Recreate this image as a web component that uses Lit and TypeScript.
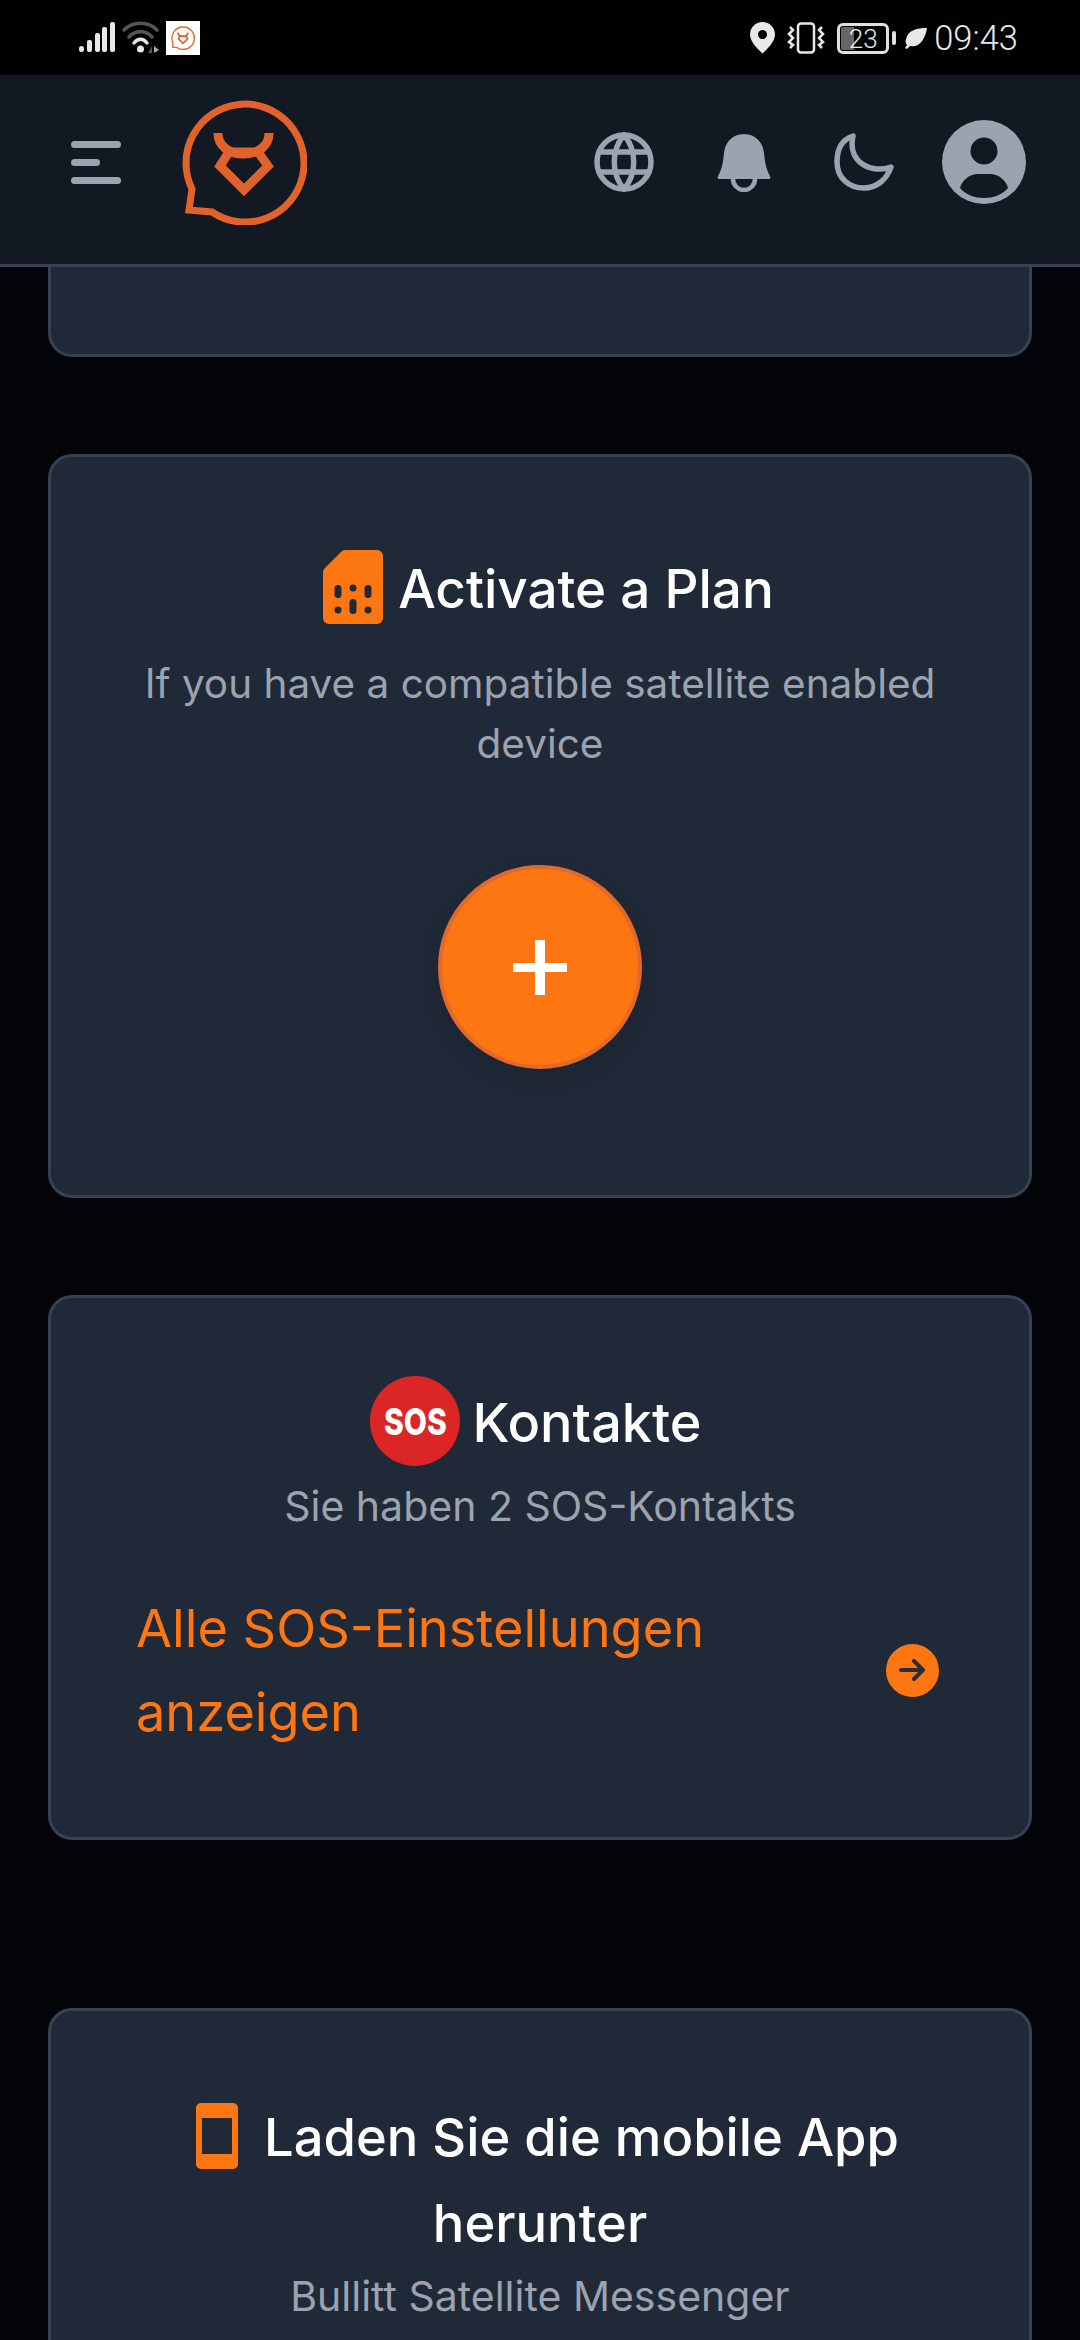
import { LitElement, html, css } from 'lit'
import { customElement } from 'lit/decorators.js'

const logo = (size: number) => html`
  <svg width=${size} height=${size} viewBox="0 0 126 126" fill="none" stroke="#e2622b" stroke-width="7">
    <path d="M11 90 L8 111 L31 113 A59 59 0 1 0 11 90 Z" />
    <path d="M37 34 C37 47 48 55 62.5 55 C77 55 88 47 88 34" stroke-width="9" />
    <path d="M39 67 L48 53 H77 L87 67 L63 91 Z" stroke-width="9" />
  </svg>
`

@customElement('app-root')
export class AppRoot extends LitElement {
  static styles = css`
    :host {
      display: block;
      width: 1080px;
      height: 2340px;
      overflow: hidden;
      background: #020408;
      font-family: Inter, "Noto Sans", sans-serif;
    }
    .status {
      height: 75px;
      background: #000;
      color: #e8e8e8;
      display: flex;
      align-items: flex-start;
      padding: 21px 62px 0 79px;
      box-sizing: border-box;
      font-family: Roboto, sans-serif;
    }
    .status svg { display: block; }
    .status-left { display: flex; align-items: flex-start; gap: 6px; }
    .status-right { margin-left: auto; display: flex; align-items: center; height: 34px; }
    .app-badge {
      width: 34px;
      height: 34px;
      background: #fff;
      display: flex;
      align-items: center;
      justify-content: center;
    }
    .vibrate { margin-left: 12px; }
    .battery {
      margin-left: 12px;
      width: 52px;
      height: 31px;
      box-sizing: border-box;
      border: 3px solid #e0e0e0;
      border-radius: 6px;
      font-size: 26px;
      line-height: 25px;
      text-align: center;
      background: linear-gradient(90deg, #666 0 14px, transparent 14px);
      background-clip: content-box;
      padding: 1px;
      font-weight: 300;
    }
    .nib { width: 4px; height: 14px; background: #e0e0e0; border-radius: 2px; margin-left: 3px; }
    .leaf { margin-left: 9px; }
    .time { margin-left: 7px; font-size: 34.5px; font-weight: 300; line-height: 34px; }

    .header {
      height: 192px;
      box-sizing: border-box;
      background: #121923;
      border-bottom: 3px solid #374151;
      display: flex;
      align-items: center;
      padding: 0 36px 15px 71px;
    }
    .burger { display: flex; flex-direction: column; gap: 11px; width: 50px; }
    .burger span { display: block; height: 7px; border-radius: 4px; background: #9ca3af; }
    .burger span:nth-child(2) { width: 29px; }
    .logo { margin-left: 60px; display: flex; }
    .actions { margin-left: auto; display: flex; align-items: center; }
    .action { width: 120px; display: flex; justify-content: center; align-items: center; }
    .action svg { display: block; }

    .content {
      padding: 0 48px;
      display: flex;
      flex-direction: column;
      gap: 97px;
    }
    .card {
      background: #1f2937;
      border: 3px solid #374151;
      border-radius: 24px;
      text-align: center;
    }
    .card-clipped {
      height: 90px;
      box-sizing: border-box;
      border-top: 0;
      border-radius: 0 0 24px 24px;
    }
    .card-plan { padding: 96px 48px 126px; }
    .card-sos { padding: 89px 48px 83px; }
    .card-app { padding: 83px 48px 200px; margin-top: 71px; }

    .title {
      display: flex;
      justify-content: center;
      align-items: center;
      gap: 15px;
      color: #fff;
      font-size: 53px;
      font-weight: 500;
      line-height: 72px;
      height: 72px;
    }
    .title svg { margin-bottom: 5px; }
    .card-plan .title { padding-left: 17px; }
    .card-sos .title { padding-right: 8px; gap: 12px; font-size: 54px; }
    .sub {
      color: #9ca3af;
      font-size: 41px;
      line-height: 60px;
    }
    .card-plan .sub { margin-top: 29px; font-size: 40.5px; }
    .card-sos .sub { margin-top: 17px; }
    .add {
      margin: 91px auto 0;
      width: 204px;
      height: 204px;
      box-sizing: border-box;
      border-radius: 50%;
      background: #fe7611;
      border: 4px solid #e2692b;
      box-shadow: 0 8px 24px rgba(0, 0, 0, 0.1);
      display: flex;
      align-items: center;
      justify-content: center;
    }
    .sos-badge {
      width: 90px;
      height: 90px;
      margin-bottom: 5px;
      border-radius: 50%;
      background: #dc2626;
      color: #fff;
      display: flex;
      align-items: center;
      justify-content: center;
      flex: none;
    }
    .sos-badge span {
      font-family: Inter, sans-serif;
      font-weight: 800;
      font-size: 30px;
      line-height: 30px;
      transform: scaleY(1.25);
    }
    .link {
      margin-top: 50px;
      padding: 0 42px 0 37px;
      display: flex;
      align-items: center;
      justify-content: space-between;
      color: #fe7611;
      font-size: 52.3px;
      line-height: 84px;
      text-align: left;
    }
    .link span { width: 640px; }
    .arrow {
      width: 53px;
      height: 53px;
      border-radius: 50%;
      background: #fe7611;
      display: flex;
      align-items: center;
      justify-content: center;
      flex: none;
    }
    .app-title {
      color: #fff;
      font-size: 52.5px;
      font-weight: 500;
      line-height: 86px;
      margin: 0 60px;
    }
    .app-title svg {
      vertical-align: middle;
      margin: -12px 26px 0 15px;
    }
  `

  private statusBar() {
    return html`
      <div class="status">
        <div class="status-left">
          <svg width="37" height="34" viewBox="0 0 37 34" fill="#e8e8e8">
            <rect x="0" y="25" width="5" height="6" rx="2.5" />
            <rect x="8" y="19" width="5" height="12" rx="2" />
            <rect x="16" y="12" width="5" height="19" rx="2" />
            <rect x="23" y="6" width="5" height="25" rx="2" />
            <rect x="31" y="1" width="5" height="30" rx="2" />
          </svg>
          <svg width="38" height="34" viewBox="0 0 38 34" fill="none">
            <path d="M2 9 C11 0 26 0 35 9" stroke="#555" stroke-width="3.5" stroke-linecap="round" />
            <path d="M7 16 C13 9 24 9 30 16" stroke="#555" stroke-width="3.5" stroke-linecap="round" />
            <path d="M12 22 C16 17 21 17 25 22" stroke="#e8e8e8" stroke-width="3.5" stroke-linecap="round" />
            <circle cx="18.5" cy="28" r="3.5" fill="#e8e8e8" />
            <path d="M30 25 V32 L26 32 Z" fill="#555" />
            <path d="M32 25 V32 L37 29 Z" fill="#aaa" />
          </svg>
          <div class="app-badge">${logo(24)}</div>
        </div>
        <div class="status-right">
          <svg width="25" height="32" viewBox="0 0 25 32" fill="#e8e8e8">
            <path fill-rule="evenodd" d="M12.5 0 C19.5 0 25 5.5 25 12.5 C25 20 17 27 12.5 31.5 C8 27 0 20 0 12.5 C0 5.5 5.5 0 12.5 0 Z M12.5 8 a4.5 4.5 0 1 0 0.01 0 Z" />
          </svg>
          <svg class="vibrate" width="38" height="32" viewBox="0 0 38 32" fill="none" stroke="#e8e8e8" stroke-width="2.5">
            <rect x="11" y="1.5" width="16" height="29" rx="3" />
            <path d="M3 5 L6 8 L2 12 L6 16 L2 20 L6 23 L3 26" />
            <path d="M35 5 L32 8 L36 12 L32 16 L36 20 L32 23 L35 26" />
          </svg>
          <div class="battery">23</div>
          <div class="nib"></div>
          <svg class="leaf" width="22" height="24" viewBox="0 0 22 24" fill="#e8e8e8">
            <path d="M22 2 C12 2 3 4 1 13 C0 16 1 18 2 19 L0 22 L2 23 L5 20 C14 22 20 14 22 2 Z" />
          </svg>
          <div class="time">09:43</div>
        </div>
      </div>
    `
  }

  private topBar() {
    return html`
      <div class="header">
        <div class="burger"><span></span><span></span><span></span></div>
        <div class="logo">${logo(126)}</div>
        <div class="actions">
          <div class="action">
            <svg width="60" height="60" viewBox="0 0 60 60" fill="none" stroke="#9ca3af" stroke-width="5.5">
              <circle cx="30" cy="30" r="27" />
              <path d="M30 3 C17 18 17 42 30 57 C43 42 43 18 30 3 Z" />
              <path d="M5 20 H55 M5 40 H55" />
            </svg>
          </div>
          <div class="action">
            <svg width="54" height="59" viewBox="0 0 54 59" fill="#9ca3af">
              <path d="M27 1C39 1 46 10 47 20C48 31 50 38 53 43C54 45 53 46 51 46L3 46C1 46 0 45 1 43C4 38 6 31 7 20C8 10 15 1 27 1Z" />
              <path d="M16 46a11 11 0 0 0 22 0" fill="none" stroke="#9ca3af" stroke-width="4.5" />
            </svg>
          </div>
          <div class="action">
            <svg width="60" height="58" viewBox="0 0 60 58" fill="none" stroke="#9ca3af" stroke-width="5.5" stroke-linejoin="round">
              <path d="M19 3 C7 7 3 18 3 29 C3 45 15 55 30 55 C43 55 53 46 57 34 C38 41 13 30 19 3 Z" />
            </svg>
          </div>
          <div class="action">
            <svg width="84" height="84" viewBox="0 0 84 84">
              <circle cx="42" cy="42" r="42" fill="#9ca3af" />
              <circle cx="42" cy="31" r="13.5" fill="#121923" />
              <path d="M18 68 C20 60 28 54 36 54 L48 54 C56 54 64 60 66 68 C60 75 51 78 42 78 C33 78 24 75 18 68 Z" fill="#121923" />
            </svg>
          </div>
        </div>
      </div>
    `
  }

  render() {
    return html`
      ${this.statusBar()}
      ${this.topBar()}
      <div class="content">
        <div class="card card-clipped"></div>

        <div class="card card-plan">
          <div class="title">
            <svg width="60" height="74" viewBox="0 0 60 74">
              <path d="M22 0 H54 a6 6 0 0 1 6 6 V68 a6 6 0 0 1 -6 6 H6 a6 6 0 0 1 -6 -6 V22 a6 6 0 0 1 2 -4 L18 2 a6 6 0 0 1 4 -2 Z" fill="#fe7611" />
              <g fill="#1f2937">
                <rect x="11.5" y="35" width="7" height="13" rx="3.5" />
                <circle cx="15" cy="60" r="3.5" />
                <circle cx="30" cy="38" r="3.5" />
                <rect x="26.5" y="49" width="7" height="15" rx="3.5" />
                <rect x="41.5" y="35" width="7" height="13" rx="3.5" />
                <circle cx="45" cy="60" r="3.5" />
              </g>
            </svg>
            Activate a Plan
          </div>
          <div class="sub">If you have a compatible satellite enabled device</div>
          <div class="add">
            <svg width="54" height="55" viewBox="0 0 54 55" fill="#fff">
              <rect x="0" y="23" width="54" height="9" />
              <rect x="22" y="0" width="10" height="55" />
            </svg>
          </div>
        </div>

        <div class="card card-sos">
          <div class="title">
            <div class="sos-badge"><span>SOS</span></div>
            Kontakte
          </div>
          <div class="sub">Sie haben 2 SOS-Kontakts</div>
          <div class="link">
            <span>Alle SOS-Einstellungen anzeigen</span>
            <div class="arrow">
              <svg width="27" height="22" viewBox="0 0 27 22" fill="none" stroke="#2b2b33" stroke-width="4" stroke-linecap="round" stroke-linejoin="round">
                <path d="M2 11 H24 M15 2 L24 11 L15 20" />
              </svg>
            </div>
          </div>
        </div>

        <div class="card card-app">
          <div class="app-title">
            <svg width="42" height="66" viewBox="0 0 42 66">
              <path fill-rule="evenodd" fill="#fe7611" d="M5 0 H37 a5 5 0 0 1 5 5 V61 a5 5 0 0 1 -5 5 H5 a5 5 0 0 1 -5 -5 V5 a5 5 0 0 1 5 -5 Z M6 15 V51 H36 V15 Z" />
            </svg>Laden Sie die mobile App herunter
          </div>
          <div class="sub">Bullitt Satellite Messenger</div>
        </div>
      </div>
    `
  }
}
